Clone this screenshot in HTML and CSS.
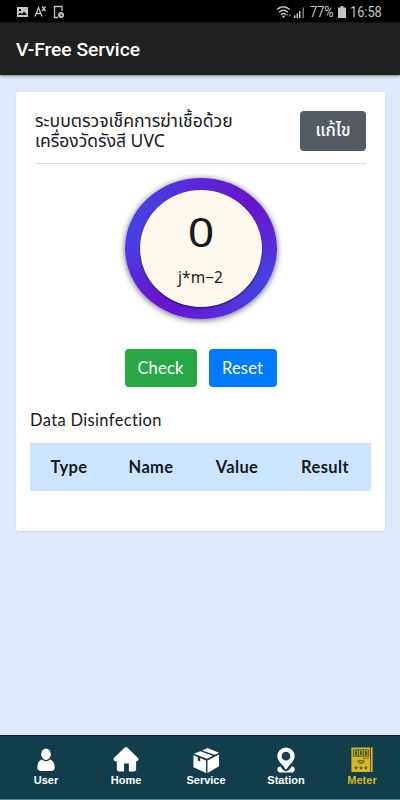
FILE: index.html
```html
<!DOCTYPE html>
<html lang="th">
<head>
<meta charset="utf-8">
<title>V-Free Service</title>
<link rel="stylesheet" href="styles.css">
</head>
<body>
<div class="status">
  <svg class="status-left" width="52" height="14" viewBox="0 0 52 14">
    <path fill="#c4c4c4" fill-rule="evenodd" d="M1 2h11v10H1zM2 10h9L8 6.500 6 9 4 7.500zM3 4h2v2H3z"/>
    <g fill="none" stroke="#c4c4c4" stroke-width="1.300"><path d="M19 11.500 22.500 2.500l3.500 9M20.300 8.500h4.400M26 1.500l3.500 4.500M29.500 1.500L26 6"/><path d="M42 12.500h-3.500v-11H46V6"/></g>
    <circle cx="45" cy="10" r="3" fill="#c4c4c4"/><path d="M45 8.500v2h1.500" fill="none" stroke="#000" stroke-width=".8"/>
  </svg>
  <div class="status-right">
    <svg width="30" height="14" viewBox="0 0 30 14">
      <g fill="none" stroke="#c4c4c4" stroke-width="1.400"><path d="M1 4.500q6-5.500 13 0M3 7.200q4.500-4 9 0M5 9.700q2.500-2.500 5 0"/></g>
      <path d="M5.700 10.700h3.600L7.500 13zM18 10.500h1.500V13H18zM20.500 8.500H22V13h-1.500zM23 6h1.500v7H23z" fill="#c4c4c4"/>
      <path d="M10 10.500l1.300-2 1.300 2zM12.700 9.500l1.300 2 1.300-2zM26.500 2.500H28V13h-1.500z" fill="#777"/>
    </svg>
    <span class="status-text percent">77%</span>
    <svg class="battery" width="8" height="12" viewBox="0 0 8 12"><path d="M2.500 0h3v1.500H8V12H0V1.500h2.500z" fill="#c4c4c4"/></svg>
    <span class="status-text clock">16:58</span>
  </div>
</div>
<header class="appbar">V-Free Service</header>
<main>
  <section class="card">
    <div class="card-head">
      <div class="title"><span class="title-a">ระบบตรวจเช็คการฆ่าเชื้อด้วย</span><span class="title-b">เครื่องวัดรังสี UVC</span></div>
      <button class="btn edit">แก้ไข</button>
    </div>
    <div class="gauge"><div class="gauge-face">
      <div class="reading">0</div>
      <div class="unit">j*m−2</div>
    </div></div>
    <div class="actions"><button class="btn check">Check</button><button class="btn reset">Reset</button></div>
    <h2>Data Disinfection</h2>
    <div class="table-head"><span>Type</span><span>Name</span><span>Value</span><span>Result</span></div>
  </section>
</main>
<nav>
  <a><svg viewBox="0 0 30 28"><ellipse cx="15" cy="7.500" rx="5" ry="6"/><path d="M10.500 13q4.500 3.500 9 0 4.500 1.500 4.500 8 0 4-4 4H10q-4 0-4-4 0-6.500 4.500-8z"/></svg><span>User</span></a>
  <a><svg viewBox="0 0 30 28"><path d="M13.700.5q1.300-1 2.600 0L27.500 11.500q1.500 2.500-1.500 3.300h-.5V23q0 2.500-2.500 2.500h-5V17h-5v8.500H8q-2.500 0-2.500-2.500v-8.200q-4.500 0-3-3.300z"/></svg><span>Home</span></a>
  <a><svg viewBox="0 0 30 28"><path d="M2.500 7 9 4.300 22 9l-6 3.200zM11 3.500 16.500 1 28.500 6 24 8zM2 8.500l4.500 2V14L9 15v-3.500l6 2.500v13L2 21zM16.500 14 28.500 7.800V20l-12 7z"/></svg><span>Service</span></a>
  <a><svg viewBox="0 0 30 28"><path fill-rule="evenodd" d="M15 .5a9 9 0 0 1 9 9c0 5-5 8-9 14-4-6-9-9-9-14a9 9 0 0 1 9-9zm0 4.500a4.500 4.500 0 1 0 0 9 4.500 4.500 0 0 0 0-9z"/><path d="M9 20Q6 20.500 6 23.300 6 26.500 10 26.500h10q4 0 4-3.200 0-2.800-3-3.300Q18.500 24.500 15 25.500q-3.500-1-6-5.500z"/></svg><span>Station</span></a>
  <a class="active"><svg viewBox="0 0 30 28"><path d="M4 .5h19.500V26H4zM24.300.5H26V26h-1.700z"/><g fill="none" stroke="#123e4c"><path d="M6 3h16v6.500H6zM11.300 3v6.500M16.700 3v6.500M16 11.800h3M20 11.800h2" stroke-width=".8"/><path d="M8 4.800h1.500v3H8zM13.300 4.800h1.500v3h-1.500zM18.600 4.800h1.500v3h-1.500zM10 15q4-2 8 0M11.500 16.500h5"/><circle cx="9" cy="21.500" r="1"/><circle cx="14" cy="21.500" r="1"/><circle cx="19" cy="21.500" r="1"/></g></svg><span>Meter</span></a>
</nav>
</body>
</html>
```
FILE: styles.css
```css
* { box-sizing: border-box; }
body { margin: 0; height: 800px; display: flex; flex-direction: column; overflow: hidden; background: #deeafc; color: #17191c; font-family: Lato, "Noto Sans", sans-serif; }
.status { height: 23px; flex: none; padding: 0 17px 0 16px; background: #000; display: flex; justify-content: space-between; align-items: center; }
.status-right { display: flex; align-items: center; }
.status-right svg { flex: none; }
.status-text { font: 15px/20px Roboto, sans-serif; color: #c4c4c4; margin-left: 4px; white-space: nowrap; transform: scaleX(.85); transform-origin: left; }
.percent { width: 29px; margin-right: -4px; }
.clock { width: 38px; margin-right: -5px; }
.battery { margin-left: 3px; }
.appbar { height: 52px; flex: none; padding-left: 16px; background: #212121; color: #fff; font: 500 19.200px/54px Roboto, sans-serif; box-shadow: 0 1px 3px #777; }
main { flex: 1; padding: 17px 15px 0 16px; }
.card { height: 439px; background: #fff; border-radius: 3px; box-shadow: 0 1px 2px #cbd5e6; padding: 18px 14px 0; }
.card-head { margin: 0 5px; height: 54px; border-bottom: 1px solid #dedede; display: flex; justify-content: space-between; }
.title { font: 17.600px/20px "Noto Sans", "Noto Sans Thai", sans-serif; }
.title-a, .title-b { display: block; white-space: nowrap; }
.title-b { font-size: 17.500px; }
.btn { border: 0; border-radius: 4px; padding: 0; color: #fff; font: 16.500px Lato, "Noto Sans", sans-serif; letter-spacing: .2px; }
.edit { width: 66px; height: 40px; margin-top: 1px; background: #545b62; font: 500 17px "Noto Sans", "Noto Sans Thai", sans-serif; letter-spacing: 0; }
.gauge { width: 152px; height: 141px; margin: 14px auto 0; border-radius: 50%; background: conic-gradient(from 50deg, #6a13cd, #493ee4 60deg, #493ee4 80deg, #6a13cd 165deg, #493ee4 225deg, #493ee4 255deg, #6a13cd 360deg); display: grid; place-items: center; box-shadow: 0 1px 6px #666; }
.gauge-face { width: 122px; height: 117px; border-radius: 50%; background: #fff8ed; text-align: center; box-shadow: 0 1px 2px #25115f; padding-top: 14px; }
.reading { font: 40px/56px "Noto Sans", sans-serif; transform: scaleX(1.16); }
.unit { font: 15.500px/24px "Noto Sans", sans-serif; margin-top: 5px; }
.actions { display: flex; gap: 12px; justify-content: center; margin-top: 30px; }
.actions .btn { height: 38px; }
.check { width: 72px; background: #28a745; }
.reset { width: 68px; background: #007bff; }
h2 { margin: 21px 0 11px; font: 16.500px/24px Lato, "Noto Sans", sans-serif; letter-spacing: .35px; font-variant-ligatures: none; }
.table-head { height: 48px; background: #cce5ff; display: grid; grid-template-columns: 78px 86px 86px 90px; text-align: center; font: 700 16.500px/49px Lato, "Noto Sans", sans-serif; letter-spacing: .35px; }
nav { height: 65px; flex: none; border-top: 1px solid #071e29; border-bottom: 1px solid #5f838a; background: #123e4c; display: grid; grid-template-columns: repeat(4, 80px) 72px; padding: 11px 0 0 6px; }
nav a { display: flex; flex-direction: column; align-items: center; color: #fff; font: 700 11px/13px "Liberation Sans", sans-serif; }
nav svg { width: 30px; height: 27px; flex: none; fill: currentColor; }
nav .active { color: #dfb51c; }
```
